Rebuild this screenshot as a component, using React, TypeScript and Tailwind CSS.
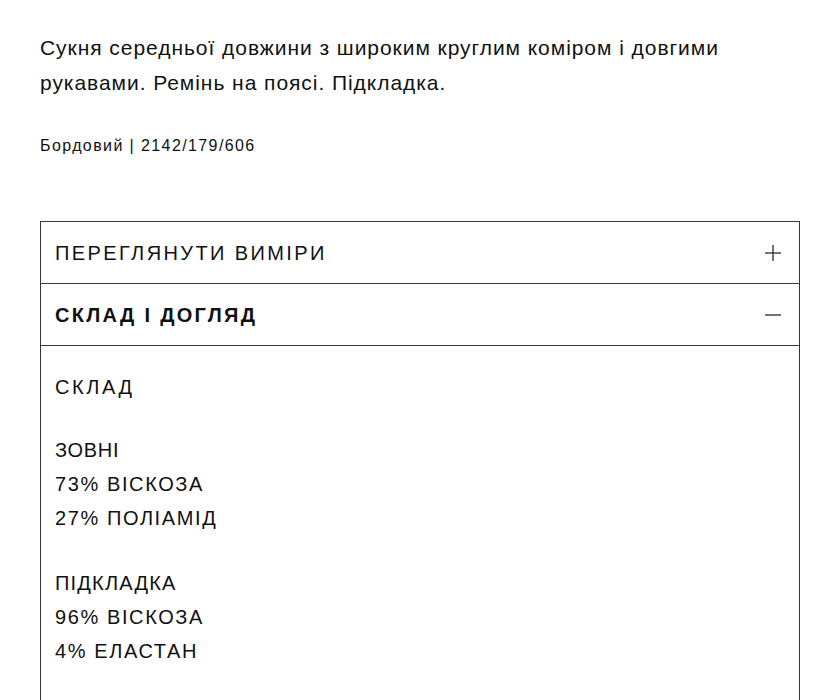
/**
 * Thin plus / minus glyph used on the accordion rows
 */
function ToggleIcon({ open }: { open?: boolean }) {
  return (
    <svg width="16" height="16" viewBox="0 0 16 16" className="text-[#2a2a2a]" fill="none">
      <line x1="0" y1="8" x2="16" y2="8" stroke="currentColor" strokeWidth="1.3" />
      {!open && <line x1="8" y1="0" x2="8" y2="16" stroke="currentColor" strokeWidth="1.3" />}
    </svg>
  )
}

/**
 * One row of the accordion header
 */
function AccordionHeader({ title, open }: { title: string; open?: boolean }) {
  return (
    <div className="flex h-[62px] items-center justify-between border-b border-[#3a3a3a] pl-[14px] pr-[18px]">
      <span
        className={
          open
            ? 'text-[20px] font-bold tracking-[2.3px] text-[#111]'
            : 'text-[20px] tracking-[2.4px] text-[#111]'
        }
      >
        {title}
      </span>
      <ToggleIcon open={open} />
    </div>
  )
}

export default function App() {
  return (
    <div
      className="min-h-[700px] bg-white px-[40px] pt-[30px] text-[#111]"
      style={{ fontFamily: '"Liberation Sans", Arial, sans-serif' }}
    >
      <p className="text-[21px] leading-[35px] tracking-[0.95px]">
        Сукня середньої довжини з широким круглим коміром і довгими рукавами. Ремінь на поясі. Підкладка.
      </p>
      <p className="mt-[34px] text-[16px] tracking-[1.4px]">Бордовий | 2142/179/606</p>

      <div className="mt-[63px] border border-b-0 border-[#3a3a3a]">
        <AccordionHeader title="ПЕРЕГЛЯНУТИ ВИМІРИ" />
        <AccordionHeader title="СКЛАД І ДОГЛЯД" open />
        <div className="pl-[14px] pr-[15px] pt-[24px] pb-[60px] text-[20px] leading-[34px] tracking-[1.6px]">
          <div className="tracking-[2.6px]">СКЛАД</div>
          <div className="mt-[29px] tracking-[0.7px]">ЗОВНІ</div>
          <div>73% ВІСКОЗА</div>
          <div>27% ПОЛІАМІД</div>
          <div className="mt-[31px] tracking-[1.2px]">ПІДКЛАДКА</div>
          <div>96% ВІСКОЗА</div>
          <div>4% ЕЛАСТАН</div>
        </div>
      </div>
    </div>
  )
}
